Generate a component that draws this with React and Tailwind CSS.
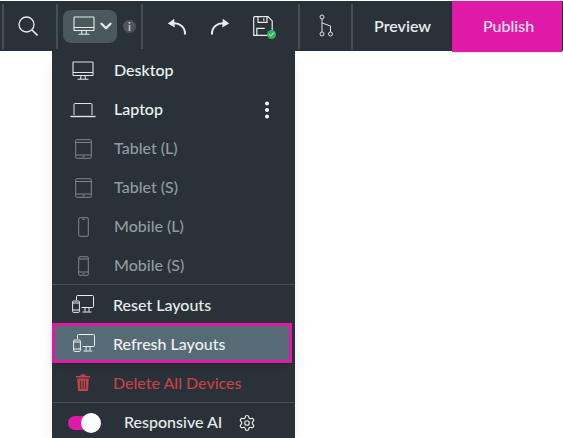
import { ChevronDown, Settings, EllipsisVertical, Check } from "lucide-react";

const Monitor = ({ className = "" }) => (
  <svg viewBox="0 0 22 20" className={className} fill="none" stroke="currentColor" strokeWidth="1.1">
    <rect x="1" y="1" width="20" height="13.5" rx="0.5" />
    <path d="M1 11.5h20M9 14.5l-.5 3.5M13 14.5l.5 3.5M5.5 18.3h11" />
  </svg>
);

const Laptop = ({ className = "" }) => (
  <svg viewBox="0 0 26 16" className={className} fill="none" stroke="currentColor" strokeWidth="1">
    <path d="M4 13V2.5a1 1 0 0 1 1-1h16a1 1 0 0 1 1 1V13" />
    <path d="M.5 14.5h25" strokeWidth="1.4" />
  </svg>
);

const Tablet = ({ className = "" }) => (
  <svg viewBox="0 0 17 20" className={className} fill="none" stroke="currentColor" strokeWidth="1">
    <rect x="0.7" y="0.7" width="15.6" height="18.6" rx="1" />
    <path d="M.7 3.5h15.6M.7 16h15.6M7.5 17.7h2" />
  </svg>
);

const Phone = ({ lines, className = "" }) => (
  <svg viewBox="0 0 11 20" className={className} fill="none" stroke="currentColor" strokeWidth="1">
    <rect x="0.7" y="0.7" width="9.6" height="18.6" rx="1.2" />
    {lines ? <path d="M.7 3h9.6M.7 16h9.6M4.5 17.7h2" /> : <path d="M4 2.2h3" />}
  </svg>
);

const Devices = ({ className = "" }) => (
  <svg viewBox="0 0 22 18" className={className} fill="none" stroke="currentColor" strokeWidth="1">
    <path d="M4.5 5V1.5a1 1 0 0 1 1-1h15a1 1 0 0 1 1 1v10a1 1 0 0 1-1 1H9.5" />
    <rect x="0.6" y="6" width="6.8" height="11.4" rx="1" />
    <path d="M.6 8h6.8M.6 15h6.8M13 12.5v4M17 12.5v4M10.5 17h9" />
  </svg>
);

const SearchIcon = () => (
  <svg viewBox="0 0 20 20" className="w-5 h-5" fill="none" stroke="currentColor" strokeWidth="1.3">
    <circle cx="8.5" cy="8.5" r="7.5" />
    <path d="M14 14l5.5 5.5" strokeWidth="1.6" />
  </svg>
);

const Undo = ({ flip }) => (
  <svg viewBox="0 0 20 17" className={`w-5 h-[17px] ${flip ? "-scale-x-100" : ""}`} fill="none" stroke="currentColor" strokeWidth="2">
    <path d="M18 16.5C18.5 9.5 13 4.5 5 5.5" />
    <path d="M.8 5.5L7.2.8 7.8 9.5z" fill="currentColor" stroke="none" />
  </svg>
);

const TrashIcon = () => (
  <svg viewBox="0 0 14 17" className="w-[14px] h-[17px] text-[#c4434a]" fill="currentColor">
    <path d="M0 2h4.5V.6h5V2H14v1.6H0zM1.2 4.6h11.6L12 17H2z" />
    <path d="M4.6 6.5v8.5M7 6.5v8.5M9.4 6.5v8.5" stroke="#283238" strokeWidth="0.9" />
  </svg>
);

const SaveCheck = () => (
  <div className="relative w-[20px] h-[20px] text-[#e8ebec]">
    <svg viewBox="0 0 20 20" className="w-5 h-5" fill="none" stroke="currentColor" strokeWidth="1.2">
      <path d="M1.5.7h13.5l4.2 4.2v14.4H.7V1.5z" />
      <path d="M5 .7v5.6h9V.7M10.8 2.5v2.2M3.8 19.3v-7h8" />
    </svg>
    <div className="absolute right-[-3px] bottom-[-3px] w-[9px] h-[9px] rounded-full bg-[#2fb55d] flex items-center justify-center">
      <Check className="w-[7px] h-[7px] text-white" strokeWidth={3} />
    </div>
  </div>
);

const Branch = () => (
  <svg viewBox="0 0 16 24" className="w-4 h-6 text-[#dfe3e5]" fill="none" stroke="currentColor" strokeWidth="1">
    <circle cx="4" cy="3" r="2" />
    <circle cx="4" cy="20" r="2" />
    <circle cx="12.5" cy="20" r="2" />
    <path d="M4 5v13M4 9l8.5 3v6" />
  </svg>
);

const Divider = () => <div className="w-[2px] h-[45px] bg-[#454f55] shrink-0" />;

const devices = [
  { label: "Desktop", icon: <Monitor className="w-[22px] h-5" />, on: true },
  { label: "Laptop", icon: <Laptop className="w-[26px] h-4" />, on: true, more: true },
  { label: "Tablet (L)", icon: <Tablet className="w-[17px] h-5" /> },
  { label: "Tablet (S)", icon: <Tablet className="w-[17px] h-5" /> },
  { label: "Mobile (L)", icon: <Phone className="w-[11px] h-5" /> },
  { label: "Mobile (S)", icon: <Phone lines className="w-[11px] h-5" /> },
];

export default function App() {
  return (
    <div className="relative w-[563px] h-[438px] overflow-hidden bg-white font-['Lato',sans-serif]">
      {/* top toolbar */}
      <div className="h-[50px] mt-px bg-[#283238] flex items-center pl-[2px] text-[#e8ebec]">
        <Divider />
        <div className="w-[52px] flex pl-[14px]">
          <SearchIcon />
        </div>
        <Divider />
        <div className="w-[83px] flex items-center pl-[5px]">
          <div className="w-[54px] h-[33px] rounded-lg bg-[#4b595f] flex items-center pl-[10px] gap-[2px]">
            <Monitor className="w-[22px] h-5" />
            <ChevronDown className="w-[18px] h-[18px]" strokeWidth={3} />
          </div>
          <div className="ml-[6px] w-[13px] h-[13px] rounded-full bg-[#4b555a] flex items-center justify-center text-[11px] leading-none font-bold text-[#c5cacc]">
            i
          </div>
        </div>
        <Divider />
        <div className="w-[155px] flex items-center pl-[24px]">
          <Undo />
          <div className="ml-[23px]">
            <Undo flip />
          </div>
          <div className="ml-[23px]">
            <SaveCheck />
          </div>
        </div>
        <Divider />
        <div className="w-[51px] flex justify-center">
          <Branch />
        </div>
        <Divider />
        <div className="w-[99px] text-center text-[16px] font-semibold text-[#e8ebec]">Preview</div>
        <div className="w-[110px] h-[51px] self-start bg-[#e01aa8] shadow-sm flex items-center justify-center pl-[3px] pb-[2px] text-[16px] font-medium text-[#f8e6f3]">
          Publish
        </div>
      </div>

      {/* device dropdown */}
      <div className="absolute left-[52px] top-[50px] w-[243px] h-[388px] bg-[#283238] shadow-lg text-[16px] font-medium">
        <div className="pt-px">
          {devices.map((d) => (
            <div key={d.label} className={`h-[39px] flex items-center ${d.on ? "text-[#f0f2f3]" : "text-[#949b9f]"}`}>
              <div className={`w-[62px] flex justify-center shrink-0 ${d.on ? "text-[#e0e4e6]" : "text-[#7f878b]"}`}>{d.icon}</div>
              <span className="mt-[-2px]">{d.label}</span>
              {d.more && <EllipsisVertical className="ml-auto mr-[17px] w-[22px] h-[22px] text-white" strokeWidth={2.4} />}
            </div>
          ))}
        </div>
        <div className="h-px bg-[#454f55] mt-[-1px]" />
        <div className="h-[38px] flex items-center text-[#e8ebec]">
          <div className="w-[61px] flex justify-center shrink-0">
            <Devices className="w-[22px] h-[18px]" />
          </div>
          <span className="pt-[2px]">Reset Layouts</span>
        </div>
        <div className="w-[240px] h-[40px] border-[3px] border-[#e01aa8] bg-[#566b75] shadow-md flex items-center text-[#eef1f2]">
          <div className="w-[58px] flex justify-center shrink-0">
            <Devices className="w-[22px] h-[18px]" />
          </div>
          <span className="pt-[2px]">Refresh Layouts</span>
        </div>
        <div className="h-[39px] flex items-center text-[#c4434a]">
          <div className="w-[61px] flex justify-center shrink-0">
            <TrashIcon />
          </div>
          Delete All Devices
        </div>
        <div className="h-px bg-[#454f55]" />
        <div className="flex items-center h-[39px] pl-[16px] text-[#e8ebec]">
          <div className="relative w-[33px] h-[14px] rounded-full bg-[#e01aa8]">
            <div className="absolute right-0 top-[-3px] w-5 h-5 rounded-full bg-white" />
          </div>
          <span className="ml-[23px] mt-[-2px]">Responsive AI</span>
          <Settings className="ml-[16px] w-[18px] h-[18px]" strokeWidth={1.6} />
        </div>
      </div>
    </div>
  );
}
